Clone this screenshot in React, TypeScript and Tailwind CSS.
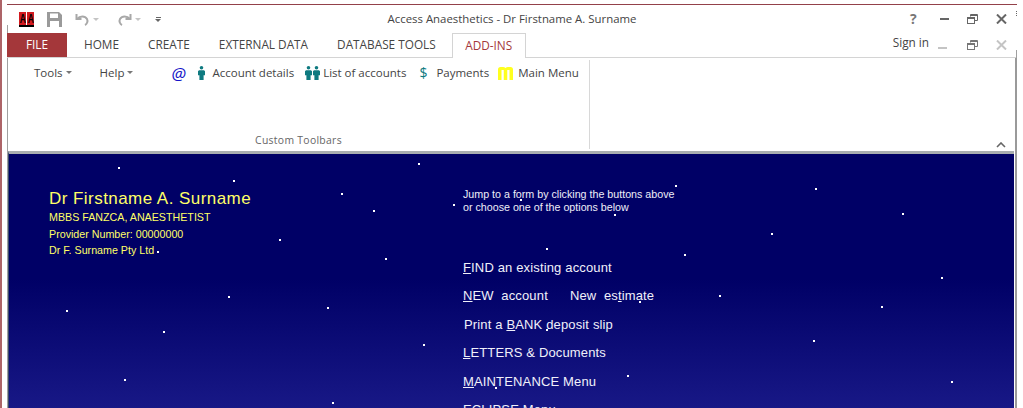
import React from 'react';

const stars: [number, number][] = [
  [118, 167], [233, 180], [341, 193], [418, 163], [373, 210], [453, 204], [279, 239], [385, 258],
  [157, 251], [546, 248], [684, 254], [675, 185], [815, 188], [902, 213], [771, 233], [614, 214],
  [941, 277], [228, 296], [327, 307], [66, 310], [163, 331], [423, 344], [719, 295], [881, 306],
  [813, 340], [627, 375], [124, 379], [951, 381], [332, 402], [546, 329], [639, 301], [520, 199],
  [495, 387],
];

const Person = () => (
  <svg width="7" height="14" viewBox="0 0 7 14" fill="#0f7a80">
    <circle cx="3.5" cy="1.8" r="1.8" />
    <path d="M1 4.2h5l1 1v4H5.6V14H1.4V9.2H0v-4z" />
  </svg>
);

const Restore = ({ color }: { color: string }) => (
  <svg width="11" height="10" viewBox="0 0 11 10" fill="none" stroke={color}>
    <path d="M3.5 2.5v-2h7v6h-2.5" />
    <path d="M3.5 1.5h7" />
    <rect x="0.5" y="3.5" width="7" height="6" />
    <path d="M0.5 4.5h7" />
  </svg>
);

const Close = ({ color }: { color: string }) => (
  <svg width="11" height="10" viewBox="0 0 11 10" stroke={color} strokeWidth="2">
    <path d="M1 0.5l9 9M10 0.5l-9 9" />
  </svg>
);

const Caret = () => <span className="ml-[3px] mb-[1px] inline-block border-x-[3px] border-t-[3px] border-x-transparent border-t-[#777]" />;

const LogoBlock = () => (
  <span className="flex h-[13px] w-[7px] justify-center overflow-hidden bg-[#d21a1f]">
    <span className="scale-x-[0.65] font-['Liberation_Sans',sans-serif] text-[13px] font-bold leading-[14px] text-black">A</span>
  </span>
);

const MenuLink = ({ children, className = '' }: { children: React.ReactNode; className?: string }) => (
  <div className={`h-[28.5px] whitespace-nowrap text-[13px] leading-[16px] tracking-[0.15px] text-[#f0f0fa] ${className}`}>{children}</div>
);

export default function App() {
  return (
    <div className="relative flex h-[408px] w-[1023px] overflow-hidden bg-white font-['Open_Sans',sans-serif] text-[12px] text-[#444]">
      {/* window edge */}
      <div className="w-[7px] border-l-2 border-[#ad6468]" />

      <div className="flex w-[1010px] flex-col">
        {/* title bar */}
        <div className="mt-1 flex h-[29px] items-center border-t border-[#93414a]">
          <div className="flex w-[300px] items-center">
            <div className="ml-[12px] flex w-[15px] gap-[1px] border-b-2 border-black">
              <LogoBlock />
              <LogoBlock />
            </div>
            <svg className="ml-[13px]" width="15" height="15" viewBox="0 0 15 15">
              <path d="M0 0h12l3 3v12H0z" fill="#9a9a9a" />
              <rect x="3" y="1.5" width="8" height="4.5" fill="#fff" />
              <rect x="3" y="9" width="9" height="6" fill="#fff" />
            </svg>
            <svg className="ml-[13px]" width="15" height="13" viewBox="0 0 15 13" fill="none" stroke="#a8a8a8" strokeWidth="2">
              <path d="M1.5 1v5h5" />
              <path d="M2 6c3-3.5 8-3.5 10 0 1.2 2.4 0 5-2 6" />
            </svg>
            <span className="ml-[3px] border-x-[3px] border-t-[3px] border-x-transparent border-t-[#c4c4c4]" />
            <svg className="ml-[18px]" width="15" height="13" viewBox="0 0 15 13" fill="none" stroke="#a8a8a8" strokeWidth="2">
              <path d="M13.5 1v5h-5" />
              <path d="M13 6c-3-3.5-8-3.5-10 0-1.2 2.4 0 5 2 6" />
            </svg>
            <span className="ml-[3px] border-x-[3px] border-t-[3px] border-x-transparent border-t-[#c4c4c4]" />
            <div className="ml-[14px] flex flex-col items-center gap-[1px]">
              <span className="h-[1px] w-[5px] bg-[#666]" />
              <span className="border-x-[3px] border-t-[3px] border-x-transparent border-t-[#666]" />
            </div>
          </div>
          <div className="w-[410px] whitespace-nowrap text-center text-[11.4px] text-[#444]">Access Anaesthetics - Dr Firstname A. Surname</div>
          <div className="flex flex-1 items-center text-[#777]">
            <span className="ml-[193px] w-[30px] text-[14px] font-bold leading-none">?</span>
            <span className="h-[2px] w-[9px] bg-[#666]" />
            <span className="ml-[18px]"><Restore color="#666" /></span>
            <span className="ml-[18px]"><Close color="#666" /></span>
          </div>
        </div>

        {/* tabs */}
        <div className="flex h-[25px] items-stretch whitespace-nowrap border-b border-[#d4d4d4] text-[11.8px] text-[#444]">
          <div className="flex h-[24px] w-[60px] items-center justify-center bg-[#a4373a] text-white">FILE</div>
          <div className="ml-[17px] flex gap-[29px] pt-[3px]">
            <span>HOME</span>
            <span>CREATE</span>
            <span>EXTERNAL DATA</span>
            <span>DATABASE TOOLS</span>
          </div>
          <div className="ml-[16px] flex h-[25px] w-[74px] items-center justify-center border-x border-t border-[#d4d4d4] bg-white text-[#a4373a]">ADD-INS</div>
          <div className="ml-[367px] pt-[1px]">Sign in</div>
          <div className="flex items-center">
            <span className="ml-[9px] mt-[6px] h-[2px] w-[9px] bg-[#c4c4c4]" />
            <span className="ml-[20px]"><Restore color="#777" /></span>
            <span className="ml-[18px]"><Close color="#c4c4c4" /></span>
          </div>
        </div>

        {/* ribbon */}
        <div className="flex h-[93px] border-l border-r-2 border-l-[#a0a0a0] border-r-[#9a9a9a]">
          <div className="my-[2px] flex w-[582px] flex-col justify-between border-r border-[#d8d8d8] pb-[2px]">
            <div className="flex h-[26px] items-center whitespace-nowrap text-[11.5px] text-[#444]">
              <span className="ml-[26px] flex items-center">Tools<Caret /></span>
              <span className="ml-[28px] flex items-center">Help<Caret /></span>
              <span className="ml-[38px] w-[15px] text-[17px] font-medium italic leading-none text-[#1414c8]">@</span>
              <span className="ml-[12px]"><Person /></span>
              <span className="ml-[7px]">Account details</span>
              <span className="ml-[11px] flex gap-[1px]"><Person /><Person /></span>
              <span className="ml-[3px]">List of accounts</span>
              <span className="ml-[13px] w-[17px] text-[14px] leading-none text-[#0f7a80]">$</span>
              <span>Payments</span>
              <svg className="ml-[9px]" width="15" height="13" viewBox="0 0 15 13" fill="#ffff1e">
                <path d="M0 13V2.500Q0 0 2.500 0H5q1.600 0 2.500 1 .9-1 2.500-1h2.500Q15 0 15 2.500V13h-3.500V3H9.250v10h-3.500V3H3.500v10z" />
              </svg>
              <span className="ml-[5px]">Main Menu</span>
            </div>
            <div className="text-center text-[10.4px] leading-[14px] tracking-[0.3px] text-[#666]">Custom Toolbars</div>
          </div>
          <div className="flex flex-1 items-end justify-end pb-[3px] pr-[9px]">
            <svg width="10" height="6" viewBox="0 0 10 6" fill="none" stroke="#666" strokeWidth="1.600">
              <path d="M1 5l4-4 4 4" />
            </svg>
          </div>
        </div>

        {/* form */}
        <div className="flex min-h-0 flex-1 border-l border-r-2 border-l-[#a0a0a0] border-r-[#9a9a9a] bg-white pr-[1px]">
          <div className="flex w-full flex-col border-l border-t-[3px] border-l-[#3c4a6a] border-t-[#a9aeb0]">
            <div className="flex flex-1 bg-[linear-gradient(180deg,#000066_0%,#000066_45%,#1c1c8c_100%)] font-['Liberation_Sans',sans-serif]">
              <div className="w-[454px] whitespace-nowrap pl-[40px] pt-[34px] text-[#ffff66]">
                <div className="text-[17px] leading-[21px] tracking-[0.45px]">Dr Firstname A. Surname</div>
                <div className="text-[10.7px] leading-[16.500px]">MBBS FANZCA, ANAESTHETIST</div>
                <div className="text-[10.7px] leading-[16.500px]">Provider Number: 00000000</div>
                <div className="text-[10.7px] leading-[16.500px]">Dr F. Surname Pty Ltd</div>
              </div>
              <div className="pt-[34px] text-white">
                <div className="whitespace-nowrap text-[10.7px] leading-[13px] text-[#eeeef8]">
                  Jump to a form by clicking the buttons above
                  <br />
                  or choose one of the options below
                </div>
                <div className="mt-[45.5px]">
                  <MenuLink><u>F</u>IND an existing account</MenuLink>
                  <MenuLink className="flex gap-[22px]">
                    <span><u>N</u>EW&nbsp; account</span>
                    <span>New&nbsp; es<u>t</u>imate</span>
                  </MenuLink>
                  <MenuLink className="pl-[1px]">Print a <u>B</u>ANK deposit slip</MenuLink>
                  <MenuLink><u>L</u>ETTERS &amp; Documents</MenuLink>
                  <MenuLink><u>M</u>AINTENANCE Menu</MenuLink>
                  <MenuLink>ECLIPSE Menu</MenuLink>
                </div>
              </div>
            </div>
          </div>
        </div>
      </div>

      {/* bits of the window frame that stick out above the ribbon */}
      <span className="absolute left-[7px] top-[25px] h-[8px] w-[1px] bg-[#a0a0a0]" />
      <span className="absolute left-[1016px] top-[50px] h-[8px] w-[1px] bg-[#a0a0a0]" />
      <span className="absolute left-[1016px] top-[11px] h-[5px] w-[1px] border-l border-dotted border-[#666]" />

      {/* star field */}
      {stars.map(([x, y]) => (
        <span key={`${x}-${y}`} className="absolute h-[2px] w-[2px] bg-white" style={{ left: x, top: y }} />
      ))}
    </div>
  );
}
